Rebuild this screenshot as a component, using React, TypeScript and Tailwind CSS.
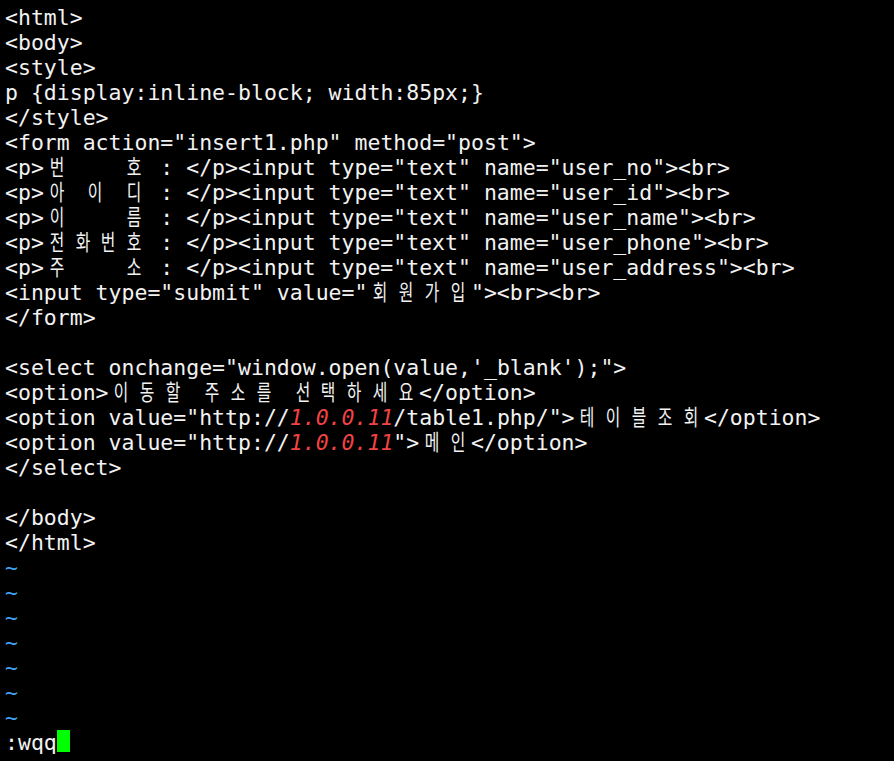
import React from 'react';

type Seg = { t: string; red?: boolean };
type Row = string | Seg[] | { tilde: true } | { cmd: string };

const rows: Row[] = [
  '<html>',
  '<body>',
  '<style>',
  'p {display:inline-block; width:85px;}',
  '</style>',
  '<form action="insert1.php" method="post">',
  '<p>번    호 : </p><input type="text" name="user_no"><br>',
  '<p>아 이 디 : </p><input type="text" name="user_id"><br>',
  '<p>이    름 : </p><input type="text" name="user_name"><br>',
  '<p>전화번호 : </p><input type="text" name="user_phone"><br>',
  '<p>주    소 : </p><input type="text" name="user_address"><br>',
  '<input type="submit" value="회원가입"><br><br>',
  '</form>',
  '',
  `<select onchange="window.open(value,'_blank');">`,
  '<option>이동할 주소를 선택하세요</option>',
  [{ t: '<option value="http://' }, { t: '1.0.0.11', red: true }, { t: '/table1.php/">테이블조회</option>' }],
  [{ t: '<option value="http://' }, { t: '1.0.0.11', red: true }, { t: '">메인</option>' }],
  '</select>',
  '',
  '</body>',
  '</html>',
  { tilde: true },
  { tilde: true },
  { tilde: true },
  { tilde: true },
  { tilde: true },
  { tilde: true },
  { tilde: true },
  { cmd: ':wqq' },
];

const isWide = (ch: string) => /[\u1100-\u11ff\u3130-\u318f\uac00-\ud7af]/.test(ch);

// terminal cells: hangul takes two columns
function Cells({ s }: { s: string }) {
  const out: React.ReactNode[] = [];
  let buf = '';
  let k = 0;
  for (const ch of Array.from(s)) {
    if (isWide(ch)) {
      if (buf) out.push(<span key={k++}>{buf}</span>);
      buf = '';
      out.push(
        <span key={k++} className="inline-block w-[2ch] text-center">
          <span className="inline-block scale-x-[0.72] font-['Noto_Sans_CJK_KR',sans-serif] text-[22px] leading-[20px]">
            {ch}
          </span>
        </span>
      );
    } else {
      buf += ch;
    }
  }
  if (buf) out.push(<span key={k++}>{buf}</span>);
  return <>{out}</>;
}

function Line({ row }: { row: Row }) {
  if (typeof row === 'string') return <Cells s={row} />;
  if ('tilde' in row) return <span className="text-[#3ea6f5]">~</span>;
  if ('cmd' in row)
    return (
      <>
        <span>{row.cmd}</span>
        <span className="inline-block w-[1ch] h-[22px] align-top bg-[#00ff00]" />
      </>
    );
  return (
    <>
      {row.map((seg, i) =>
        seg.red ? (
          <span key={i} className="italic text-[#f04444]">
            {seg.t}
          </span>
        ) : (
          <Cells key={i} s={seg.t} />
        )
      )}
    </>
  );
}

export default function App() {
  return (
    <div className="min-h-screen w-full bg-black text-[#f2f2f2] font-['DejaVu_Sans_Mono',monospace] text-[21.5px]">
      <div className="flex flex-col pt-[5px] pl-[5px]">
        {rows.map((row, i) => (
          <div key={i} className="h-[25px] leading-[25px] whitespace-pre">
            <Line row={row} />
          </div>
        ))}
      </div>
    </div>
  );
}
